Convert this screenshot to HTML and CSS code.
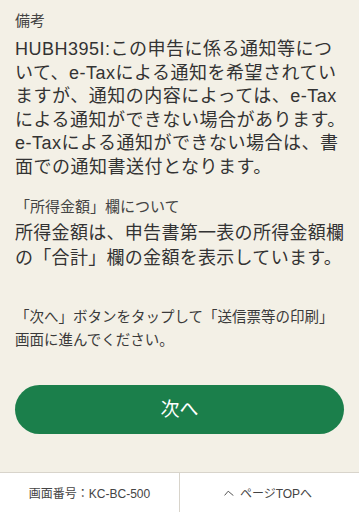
FILE: index.html
```html
<!DOCTYPE html>
<html lang="ja">
<head>
<meta charset="utf-8">
<meta name="viewport" content="width=device-width, initial-scale=1">
<title>送信票等の印刷</title>
<link rel="stylesheet" href="styles.css">
</head>
<body>
<main class="content">
  <section class="note">
    <h2 class="label">備考</h2>
    <p class="lead lead-wide">HUBH395I:この申告に係る通知等につ<br>いて、e-Taxによる通知を希望されてい<br>ますが、通知の内容によっては、e-Tax<br>による通知ができない場合があります。<br>e-Taxによる通知ができない場合は、書<br>面での通知書送付となります。</p>
  </section>
  <section class="note note-income">
    <h2 class="label">「所得金額」欄について</h2>
    <p class="lead lead-tight">所得金額は、申告書第一表の所得金額欄<br>の「合計」欄の金額を表示しています。</p>
  </section>
  <p class="guide">「次へ」ボタンをタップして「送信票等の印刷」<br>画面に進んでください。</p>
  <div class="actions">
    <button class="btn-next" type="button">次へ</button>
  </div>
</main>
<footer class="footer">
  <div class="footer-cell screen-id">画面番号：KC-BC-500</div>
  <a class="footer-cell page-top" href="#">
    <svg class="chev" width="10" height="6" viewBox="0 0 10 6" aria-hidden="true"><polyline points="0.6,5.4 4.2,1.2 9.4,5.6" fill="none" stroke="#555" stroke-width="1"/></svg>
    <span>ページTOPへ</span>
  </a>
</footer>
</body>
</html>
```

FILE: styles.css
```css
html, body {
  margin: 0;
  padding: 0;
}

body {
  width: 359px;
  height: 512px;
  overflow: hidden;
  background: #f3f0e6;
  color: #333;
  font-family: "Liberation Sans", "Noto Sans CJK JP", sans-serif;
}

.content {
  height: 472px;
  box-sizing: border-box;
  padding: 11px 9px 0 15px;
}

.label {
  margin: 0;
  font-size: 15px;
  line-height: 20px;
  font-weight: normal;
  color: #444;
}

.lead {
  margin: 7px 0 0;
  font-size: 18px;
  letter-spacing: 0.3px;
  line-height: 23.5px;
  color: #333;
  white-space: nowrap;
}

.lead-wide {
  letter-spacing: 0.5px;
}

.note-income {
  margin-top: 18px;
}

.lead-tight {
  margin-top: 4px;
  line-height: 25px;
}

.guide {
  margin: 35px 0 0;
  font-size: 14.5px;
  line-height: 23px;
  color: #3a3a3a;
  white-space: nowrap;
}

.actions {
  margin-top: 33px;
  padding-right: 6px;
}

.btn-next {
  display: block;
  width: 100%;
  height: 49px;
  border: 0;
  border-radius: 25px;
  background: #1b7f4b;
  color: #fff;
  font-family: "Liberation Sans", "Noto Sans CJK JP", sans-serif;
  font-size: 19px;
  line-height: 49px;
  padding: 0;
}

.footer {
  display: grid;
  grid-template-columns: 180px 1fr;
  height: 40px;
  box-sizing: border-box;
  border-top: 1px solid #d8d4cb;
  background: #fff;
}

.footer-cell {
  display: flex;
  align-items: center;
  justify-content: center;
  font-size: 12px;
  color: #444;
  text-decoration: none;
}

.screen-id {
  border-right: 1px solid #d8d4cb;
}

.page-top {
  gap: 6px;
  padding-right: 3px;
}

.chev {
  display: block;
}
```
